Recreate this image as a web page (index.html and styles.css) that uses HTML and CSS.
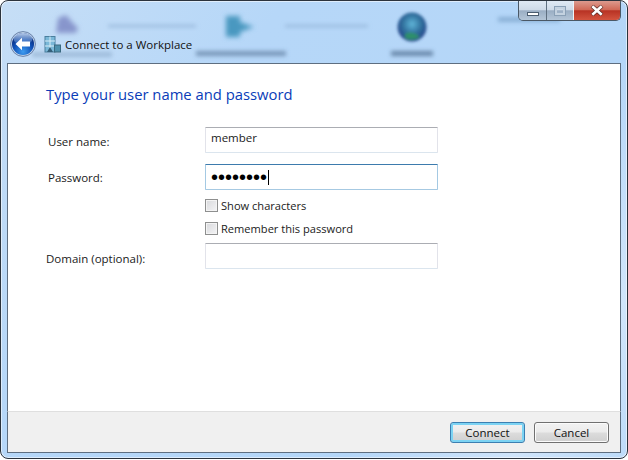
FILE: index.html
```html
<!DOCTYPE html>
<html lang="en">
<head>
<meta charset="utf-8">
<title>Connect to a Workplace</title>
<link rel="stylesheet" href="styles.css">
</head>
<body>
<div class="window">
  <svg class="backdrop" width="628" height="63" viewBox="0 0 628 63" aria-hidden="true">
    <defs>
      <filter id="blur" x="-40%" y="-40%" width="180%" height="180%"><feGaussianBlur stdDeviation="2.8"/></filter>
      <filter id="blur2" x="-40%" y="-40%" width="180%" height="180%"><feGaussianBlur stdDeviation="1.4"/></filter>
      <filter id="blur3" x="-20%" y="-300%" width="140%" height="700%"><feGaussianBlur stdDeviation="2"/></filter>
      <radialGradient id="globe" cx="50%" cy="40%" r="60%"><stop offset="0" stop-color="#5fb5d8"/><stop offset=".55" stop-color="#2f6f9c"/><stop offset="1" stop-color="#26408a"/></radialGradient>
    </defs>
    <g filter="url(#blur)">
      <path d="M58 18 L66 15 L72 22 L78 28 L76 33 L56 33 Z" fill="#8795cc"/>
      <path d="M226 16 H240 V37 H226 Z" fill="#4a98c0"/>
      <path d="M240 22 L254 27 L240 32 Z" fill="#4a98c0"/>
    </g>
    <g filter="url(#blur2)">
      <circle cx="412" cy="27" r="14.5" fill="url(#globe)"/>
      <path d="M405 34 Q412 30 420 37 Q412 42 405 38 Z" fill="#2f8f6a"/>
    </g>
    <g filter="url(#blur3)">
      <path d="M108 26 H196" stroke="#8fb0d4" stroke-width="2"/>
      <path d="M285 26 H368" stroke="#8fb0d4" stroke-width="2"/>
      <rect x="32" y="52" width="80" height="5" fill="#6d8cae" opacity=".4"/>
      <rect x="196" y="51" width="90" height="5" fill="#4f6d90" opacity=".6"/>
      <rect x="391" y="51" width="42" height="5" fill="#4f6d90" opacity=".75"/>
      <rect x="498" y="17" width="62" height="5" fill="#6d96c0" opacity=".6"/>
    </g>
  </svg>

  <div class="controls">
    <div class="ctl ctl-min"><span class="glyph-min"></span></div>
    <div class="ctl ctl-max"><span class="glyph-max"></span></div>
    <div class="ctl ctl-close">
      <svg width="14" height="11" viewBox="0 0 14 11" aria-hidden="true"><path d="M2 1 L12 10 M12 1 L2 10" stroke="#5a2a25" stroke-width="4"/><path d="M2.3 1.3 L11.7 9.7 M11.7 1.3 L2.3 9.7" stroke="#fff" stroke-width="2.6"/></svg>
    </div>
  </div>

  <header class="titlebar">
    <svg class="back" width="26" height="26" viewBox="0 0 26 26" aria-hidden="true">
      <defs>
        <radialGradient id="orb" cx="50%" cy="85%" r="75%"><stop offset="0" stop-color="#3d9cf0"/><stop offset=".6" stop-color="#0f4fb5"/><stop offset="1" stop-color="#0a2a78"/></radialGradient>
        <linearGradient id="gloss" x1="0" y1="0" x2="0" y2="1"><stop offset="0" stop-color="#cfe2fa" stop-opacity=".9"/><stop offset="1" stop-color="#5f97e0" stop-opacity=".25"/></linearGradient>
      </defs>
      <circle cx="13" cy="13" r="12.4" fill="#c4d8ee" stroke="#506a96" stroke-width=".8"/>
      <circle cx="13" cy="13" r="11" fill="url(#orb)"/>
      <ellipse cx="13" cy="8" rx="9.5" ry="6" fill="url(#gloss)"/>
      <path d="M5.5 13 L12 6.8 V10.6 H20 V15.4 H12 V19.2 Z" fill="#fff"/>
    </svg>
    <svg class="app-icon" width="17" height="17" viewBox="0 0 17 17" aria-hidden="true">
      <rect x="1" y="0.5" width="10" height="15.5" fill="#7ab8d8" stroke="#4a7f9e"/>
      <path d="M1 5 H11 M1 10 H11 M6 0.5 V16" stroke="#d6ecf6" stroke-width="1"/>
      <rect x="10.5" y="9" width="6" height="7" fill="#4e91ad" stroke="#39687f"/>
      <path d="M3 16 L6 11 L9 16" fill="#35607a"/>
    </svg>
    <span class="title">Connect to a Workplace</span>
  </header>

  <main class="content">
    <h1 class="heading">Type your user name and password</h1>
    <form class="form">
      <label class="label label-user" for="user">User name:</label>
      <div class="input input-user" id="user">member</div>
      <label class="label label-pass" for="pass">Password:</label>
      <div class="input input-focus" id="pass"><span class="dots">••••••••</span><span class="caret"></span></div>
      <div class="check check-first"><span class="box"></span><span>Show characters</span></div>
      <div class="check check-second"><span class="box"></span><span>Remember this password</span></div>
      <label class="label label-domain" for="domain">Domain (optional):</label>
      <div class="input input-domain" id="domain"></div>
    </form>
  </main>

  <footer class="footer">
    <button class="btn btn-default" type="button">Connect</button>
    <button class="btn" type="button">Cancel</button>
  </footer>
</div>
</body>
</html>
```
FILE: styles.css
```css
* { box-sizing: border-box; }
html, body { margin: 0; padding: 0; }
body {
  width: 628px;
  height: 460px;
  overflow: hidden;
  background: #fff;
  font-family: "Open Sans", "Noto Sans", sans-serif;
  font-size: 11.5px;
  color: #1a1a1a;
}
.window {
  position: relative;
  width: 628px;
  height: 459px;
  display: flex;
  flex-direction: column;
  padding: 0 6px 5px 6px;
  background: linear-gradient(125deg, #c6def6 0%, #b6d7f8 30%, #b4d6f8 70%, #d0e5fb 88%, #bddbf9 100%);
  border: 1px solid #2b333d;
  border-radius: 8px;
  overflow: hidden;
  box-shadow: inset 0 0 0 1px rgba(255, 255, 255, .55);
}
.backdrop { position: absolute; left: -1px; top: -1px; }
.controls {
  position: absolute;
  top: 0;
  right: 6px;
  display: flex;
  height: 20px;
  border: 1px solid #4a5866;
  border-top: 0;
  border-radius: 0 0 5px 5px;
  overflow: hidden;
}
.ctl {
  display: flex;
  align-items: center;
  justify-content: center;
  background: linear-gradient(#dfe9f4 0%, #cfdbe8 45%, #9aaec4 52%, #b4c5d7 100%);
}
.ctl-min { width: 28px; border-right: 1px solid #5e6f80; align-items: flex-end; padding-bottom: 4px; }
.ctl-max { width: 27px; border-right: 1px solid #eef3f8; }
.ctl-close { width: 46px; background: linear-gradient(#dc9a8e 0%, #d06a58 45%, #b83324 52%, #d3543f 100%); }
.glyph-min { width: 12px; height: 4px; background: #fff; border: 1px solid #4b5d70; }
.glyph-max { width: 12px; height: 10px; background: transparent; border: 1px solid #8aa0b6; box-shadow: inset 0 0 0 2px #c4d2e0; }
.titlebar {
  position: relative;
  height: 62px;
  display: flex;
  align-items: center;
  padding: 24px 0 0 3px;
}
.back { flex: none; }
.app-icon { flex: none; margin-left: 8px; }
.title { margin-left: 4px; font-size: 11.5px; color: #111; white-space: nowrap; }
.content {
  position: relative;
  flex: 1;
  background: #fff;
  border: 1px solid #5e6e80;
  border-bottom: 0;
  padding: 20px 0 0 38px;
}
.heading {
  margin: 0;
  font-size: 14.8px;
  line-height: 20px;
  font-weight: 400;
  color: #0a3cb8;
}
.form {
  display: grid;
  grid-template-columns: 159px 233px;
  margin-top: 23px;
}
.label { font-size: 11.5px; line-height: 17px; }
.label-user, .label-pass { padding-left: 2px; }
.label-user { grid-row: 1; grid-column: 1; margin-top: 6px; }
.label-pass { grid-row: 2; grid-column: 1; margin-top: 16px; }
.label-domain { grid-row: 5; grid-column: 1; margin-top: 15px; }
.input {
  grid-column: 2;
  height: 26px;
  padding: 1px 5px;
  font-size: 11.5px;
  line-height: 17px;
  background: #fff;
  border: 1px solid #dbe5ee;
  border-top-color: #abadb3;
  border-left-color: #e2e3ea;
  border-right-color: #e2e3ea;
  border-radius: 1px;
}
.input-user { grid-row: 1; }
.input-focus {
  grid-row: 2;
  margin-top: 11px;
  display: flex;
  align-items: center;
  border-color: #a6c9e2;
  border-top-color: #3d7bad;
  border-left-color: #a4c9e3;
  border-right-color: #a4c9e3;
}
.dots { font-family: "Liberation Sans", sans-serif; font-size: 20px; line-height: 17px; color: #000; }
.caret { width: 1px; height: 15px; margin-left: 1px; background: #000; }
.check {
  grid-column: 2;
  display: flex;
  align-items: center;
  gap: 3px;
  height: 13px;
  font-size: 11.1px;
}
.check-first { grid-row: 3; margin-top: 9px; }
.check-second { grid-row: 4; margin-top: 10px; }
.box {
  flex: none;
  width: 13px;
  height: 13px;
  border: 1px solid #8e8f8f;
  background: linear-gradient(135deg, #d8d9dc, #f4f4f6);
  box-shadow: inset 0 0 0 1px #f4f4f4;
}
.input-domain { grid-row: 5; margin-top: 8px; }
.footer {
  flex: none;
  height: 42px;
  display: flex;
  justify-content: flex-end;
  align-items: center;
  gap: 9px;
  padding: 0 11px 0 0;
  background: #f0f0f0;
  border: 1px solid #5e6e80;
  border-top: 1px solid #dfdfdf;
}
.btn {
  width: 75px;
  height: 21px;
  padding: 0;
  font-family: inherit;
  font-size: 11.5px;
  line-height: 17px;
  color: #111;
  background: linear-gradient(#f2f2f2 0%, #ebebeb 48%, #dcdcdc 52%, #cfcfcf 100%);
  border: 1px solid #707070;
  border-radius: 3px;
  box-shadow: inset 0 0 0 1px #fbfbfb;
}
.btn-default {
  border-color: #3c7fb1;
  box-shadow: inset 0 0 0 2px #7cd3f3;
}
```
